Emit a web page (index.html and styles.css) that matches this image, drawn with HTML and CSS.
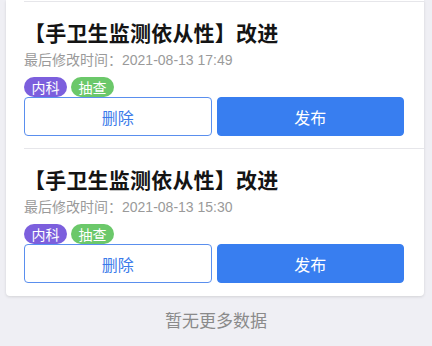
FILE: index.html
```html
<!DOCTYPE html>
<html lang="zh-CN">
<head>
<meta charset="utf-8">
<link rel="stylesheet" href="styles.css">
</head>
<body>
<div class="card">
  <div class="item">
    <div class="title">【手卫生监测依从性】改进</div>
    <div class="time">最后修改时间：2021-08-13 17:49</div>
    <div class="tags"><span class="tag purple">内科</span><span class="tag green">抽查</span></div>
    <div class="actions"><button class="btn outline">删除</button><button class="btn solid">发布</button></div>
  </div>
  <div class="item">
    <div class="title">【手卫生监测依从性】改进</div>
    <div class="time">最后修改时间：2021-08-13 15:30</div>
    <div class="tags"><span class="tag purple">内科</span><span class="tag green">抽查</span></div>
    <div class="actions"><button class="btn outline">删除</button><button class="btn solid">发布</button></div>
  </div>
</div>
<div class="footer">暂无更多数据</div>
</body>
</html>
```
FILE: styles.css
```css
* { box-sizing: border-box; }
html, body { margin: 0; padding: 0; }
body {
  background: #efeff4;
  font-family: "Noto Sans CJK SC", "Liberation Sans", sans-serif;
  width: 432px;
  height: 346px;
  overflow: hidden;
}
.card {
  margin: 0 8px 0 6px;
  background: #fff;
  padding: 1px 0 1px 0;
  border-radius: 0 0 4px 4px;
  box-shadow: 0 1px 3px rgba(0,0,0,0.12);
}
.item {
  margin-left: 18px;
  padding: 12px 20px 12px 0;
  border-top: 1px solid #e6e6ea;
}
.title {
  font-size: 21px;
  line-height: 36px;
  font-weight: bold;
  color: #141414;
  letter-spacing: 0.2px;
}
.time {
  font-size: 14px;
  line-height: 20px;
  color: #9a9a9a;
  font-family: "Liberation Sans", "Noto Sans CJK SC", sans-serif;
}
.tags {
  margin-top: 7px;
  display: flex;
  gap: 4px;
  height: 20px;
}
.tag {
  display: inline-flex;
  align-items: center;
  justify-content: center;
  width: 43px;
  height: 20px;
  border-radius: 10px;
  color: #fff;
  font-size: 14px;
}
.purple { background: #7c5fdd; }
.green { background: #6bc86a; }
.actions {
  display: flex;
  gap: 5px;
}
.btn {
  flex: 1;
  height: 39px;
  border-radius: 4px;
  font-family: "Noto Sans CJK SC", "Liberation Sans", sans-serif;
  font-size: 16px;
  padding: 0;
}
.outline {
  background: #fff;
  border: 1px solid #5a8fee;
  color: #3b7bea;
}
.solid {
  background: #387ef0;
  border: 1px solid #387ef0;
  color: #fff;
}
.footer {
  text-align: center;
  padding-top: 12px;
  font-size: 17px;
  line-height: 24px;
  color: #8a8a8a;
}
```
